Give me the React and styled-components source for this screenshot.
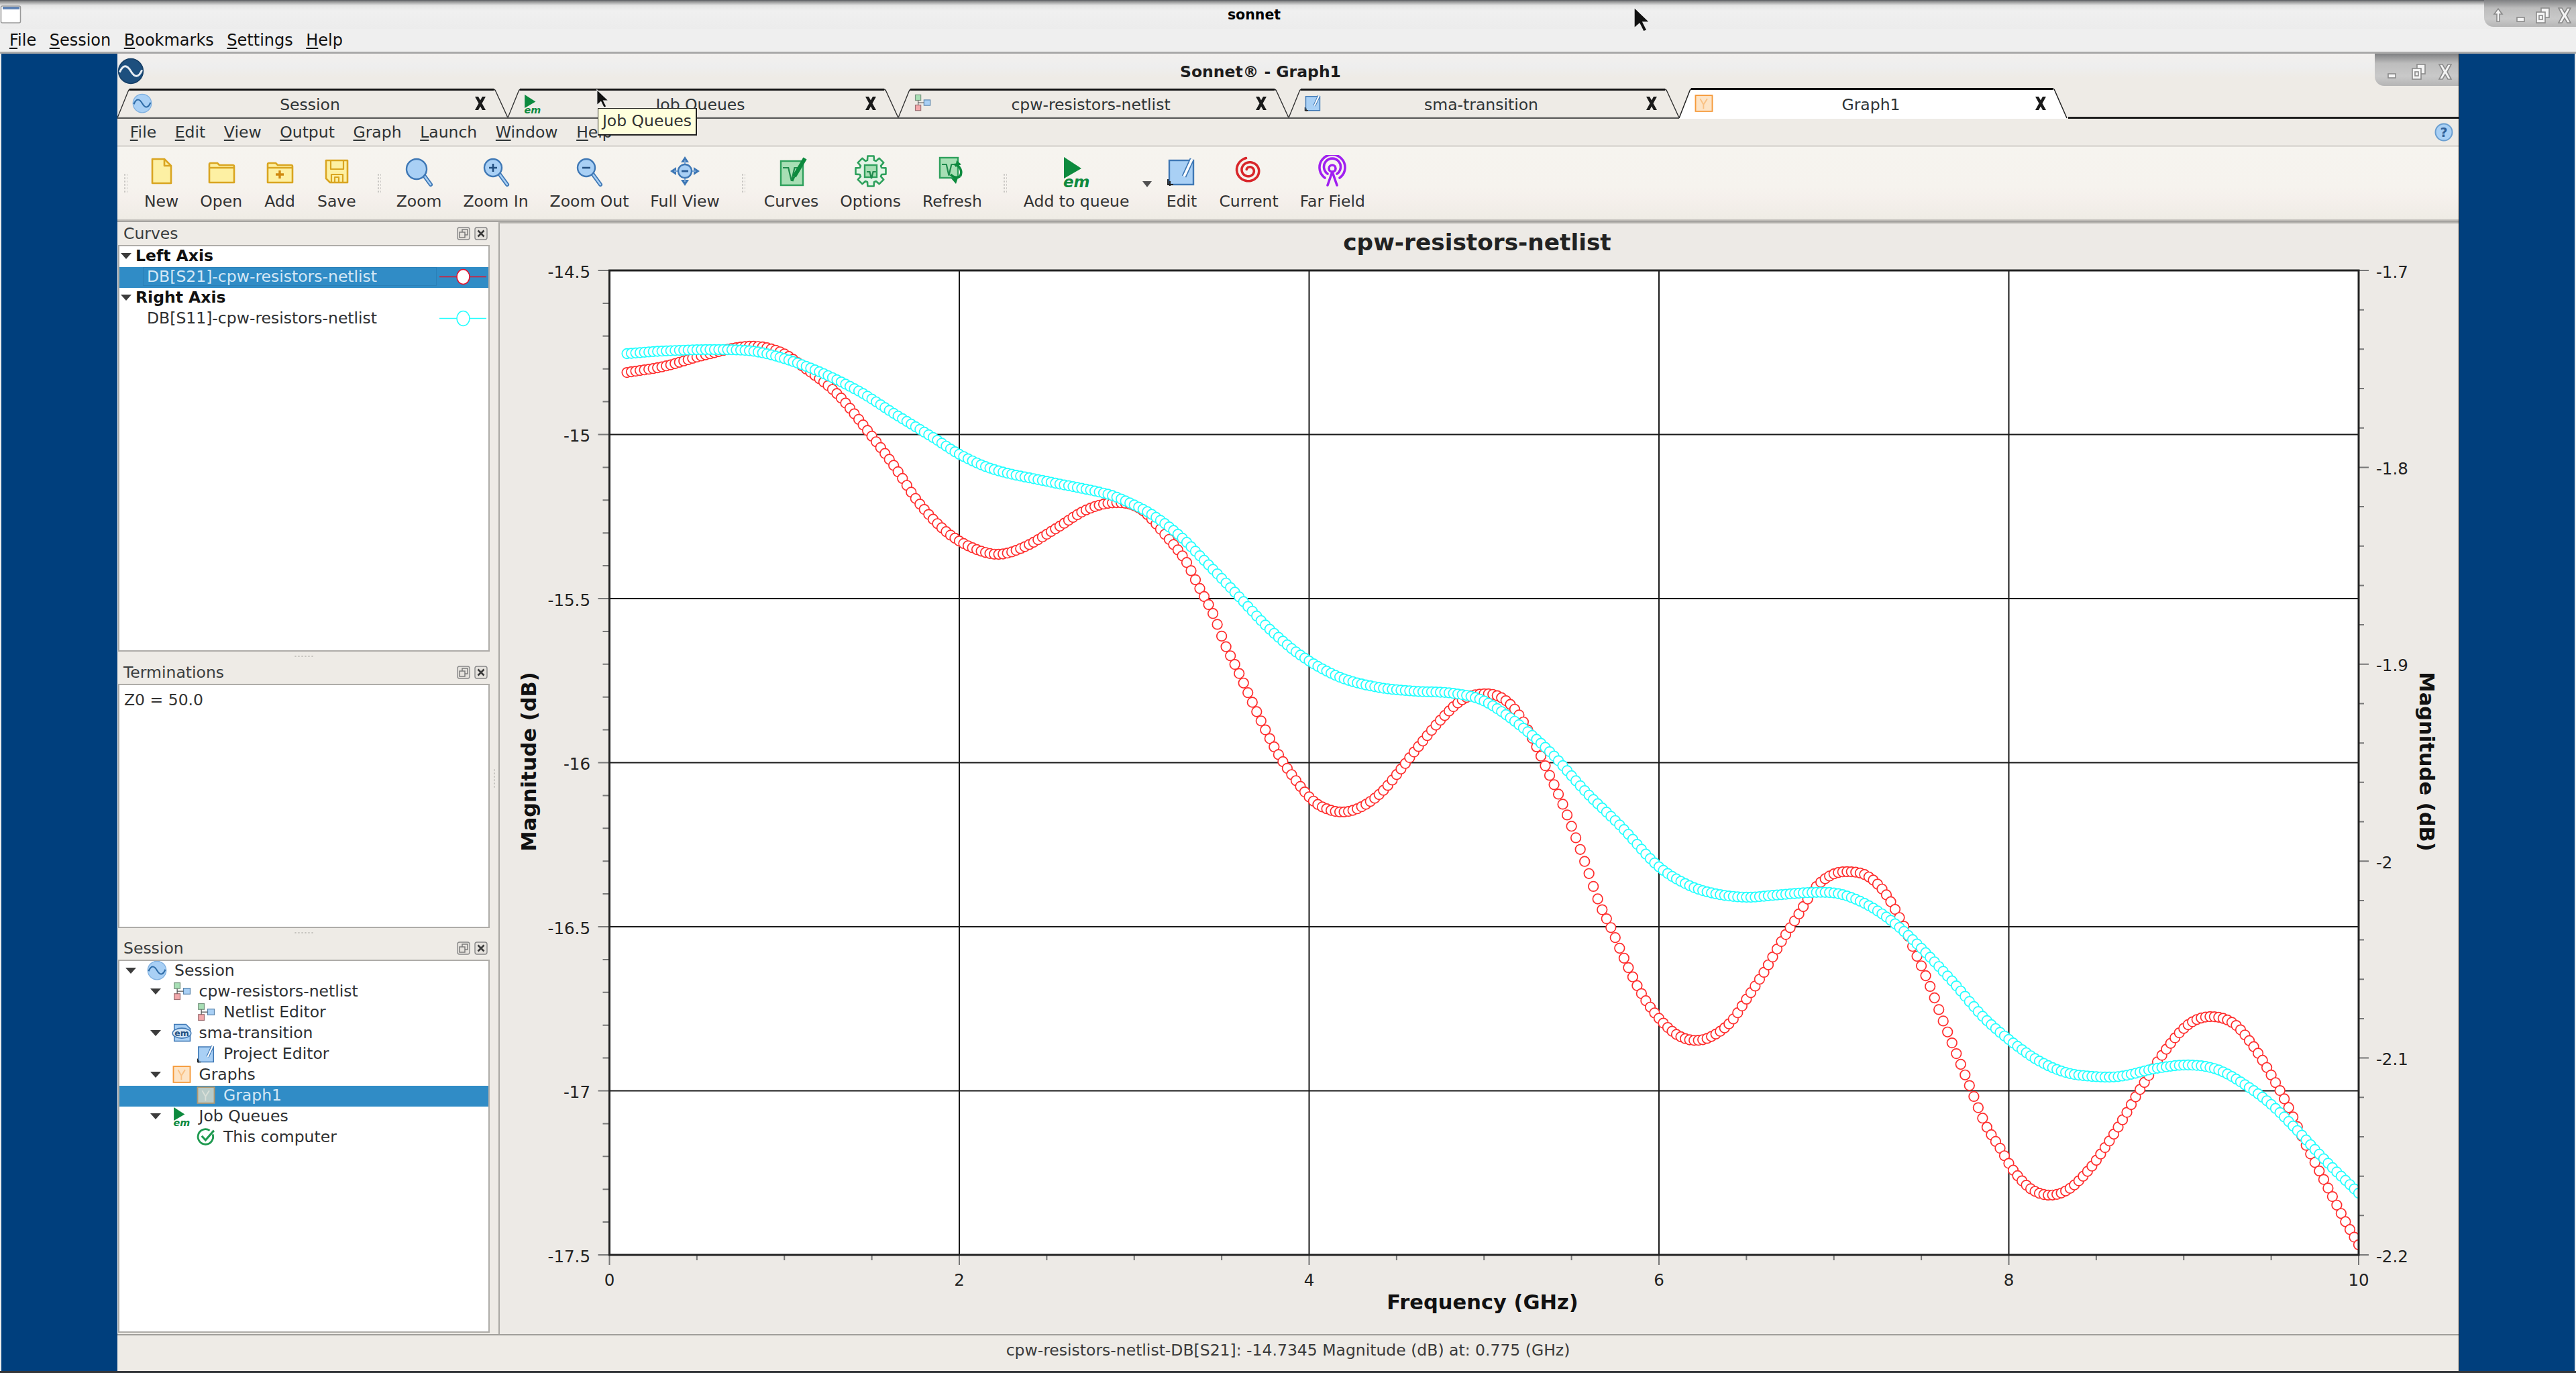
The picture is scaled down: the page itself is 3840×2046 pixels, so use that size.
import React from 'react';
import styled, { createGlobalStyle } from 'styled-components';

const GlobalStyle = createGlobalStyle`
  html, body {
    margin: 0;
    padding: 0;
    background: #003f7d;
  }
  body {
    font-family: "DejaVu Sans", "Liberation Sans", sans-serif;
    font-size: 23.5px;
    color: #2e3436;
  }
`;

// Desktop and the outer (terminal host) window
const Desktop = styled.div`
  position: relative;
  width: 3840px;
  height: 2046px;
  display: flex;
  flex-direction: column;
  overflow: hidden;
  box-sizing: border-box;
  border-bottom: 3px solid #33363a;
`;

const OuterTitle = styled.div`
  height: 43px;
  flex: none;
  display: flex;
  background: linear-gradient(#55585c 0, #8a8b8c 2px, #e4e4e4 8px, #f0f0f0 16px, #ececec 43px);
`;

const HostIcon = styled.svg`
  width: 32px;
  height: 43px;
  flex: none;
`;

const WindowTitle = styled.div`
  flex: 1;
  text-align: center;
  font-weight: 700;
  padding-left: ${(p) => p.$shift || 0}px;
  font-size: ${(p) => p.$size || 20.5}px;
  line-height: ${(p) => p.$line || 44}px;
  color: ${(p) => p.$color || '#000'};
`;

const WindowButtons = styled.div`
  flex: none;
  width: ${(p) => p.$width}px;
  height: ${(p) => p.$height}px;
  box-sizing: border-box;
  padding-top: ${(p) => p.$top}px;
  padding-right: ${(p) => p.$right}px;
  display: flex;
  justify-content: flex-end;
  gap: ${(p) => p.$gap}px;
  border-bottom-left-radius: 14px;
  background: linear-gradient(#7f8082 0, #bdbdbd 30%, #c9c9c9 70%, #b5b5b5 100%);
`;

const OuterMenu = styled.div`
  height: 37px;
  flex: none;
  box-sizing: border-box;
  display: flex;
  gap: 19.5px;
  padding-left: 14px;
  line-height: 34px;
  font-size: 24px;
  color: #111;
  background: #efefef;
  border-bottom: 3px solid #a9a9a9;
`;

const Mn = styled.span`
  text-decoration: underline;
  text-underline-offset: 3px;
`;

const BlueArea = styled.div`
  flex: 1;
  min-height: 0;
  display: flex;
  background: #003f7d;
  padding-left: 175px;
  padding-right: 172px;
  border-left: 2px solid #eee;
  border-right: 2px solid #eee;
  box-sizing: border-box;
`;

// Inner Sonnet window
const InnerWindow = styled.div`
  flex: 1;
  margin-left: -2px;
  display: flex;
  flex-direction: column;
  min-width: 0;
  background: #eeebe6;
  border-right: 1px solid #1a1a1a;
`;

const InnerTitle = styled.div`
  height: 51px;
  flex: none;
  display: flex;
  align-items: flex-start;
  background: linear-gradient(#f2f0ee 0, #eeeeee 20px, #eeebe6 36px);
`;

const LogoWrap = styled.div`
  flex: none;
  width: 40px;
  padding-top: 6px;
`;

const TabBar = styled.div`
  height: 46px;
  flex: none;
  display: flex;
`;

const Tab = styled.div`
  position: relative;
  flex: none;
  width: ${(p) => (p.$active ? 580 : 582)}px;
  height: 46px;
  display: flex;
  align-items: center;
  box-sizing: border-box;
  padding: 0 30px 0 22px;
`;

const TabShape = styled.svg`
  position: absolute;
  left: 0;
  top: 0;
  width: 100%;
  height: 100%;
`;

const TabIcon = styled.span`
  position: relative;
  flex: none;
  width: 30px;
  height: 30px;
  display: flex;
`;

const TabLabel = styled.span`
  position: relative;
  flex: 1;
  text-align: center;
  padding: 4px 8px 0 0;
`;

const TabClose = styled.svg`
  position: relative;
  flex: none;
  width: 22px;
  height: 22px;
`;

const TabRest = styled.div`
  flex: 1;
  border-bottom: 3px solid #1e1e1e;
  box-sizing: border-box;
`;

const MenuRow = styled.div`
  height: 42px;
  flex: none;
  box-sizing: border-box;
  display: flex;
  align-items: center;
  padding: 1px 8px 0 5px;
  border-bottom: 3px solid #dedbd6;
  background: #eeebe6;
`;

const MenuItem = styled.span`
  padding: 0 13.8px;
`;

const HelpButton = styled.svg`
  margin-left: auto;
  width: 28px;
  height: 28px;
`;

const Toolbar = styled.div`
  height: 108px;
  flex: none;
  display: flex;
  align-items: stretch;
  background: linear-gradient(#f6f4ef 0, #f6f3ee 55%, #f5f0ec 70%, #efece5 100%);
`;

const Grip = styled.div`
  flex: none;
  width: ${(p) => p.$width}px;
  display: flex;
  align-items: center;
  justify-content: center;
  padding-left: ${(p) => p.$shift || 0}px;
  box-sizing: border-box;
  &::before {
    content: '';
    width: 6px;
    height: 30px;
    background-image: radial-gradient(circle, #c8c6c2 1px, transparent 1.4px);
    background-size: 4px 5px;
  }
`;

const ToolButton = styled.div`
  flex: none;
  padding: 12px 16px 0;
  display: flex;
  flex-direction: column;
  align-items: center;
  box-sizing: border-box;
  color: #333;
`;

const ToolIcon = styled.div`
  width: 48px;
  height: 48px;
  display: flex;
  justify-content: center;
`;

const ToolLabel = styled.div`
  margin-top: 7px;
  line-height: 28px;
  white-space: nowrap;
`;

const DropArrow = styled.div`
  flex: none;
  width: 22px;
  display: flex;
  justify-content: center;
  align-items: center;
  padding-top: 2px;
  &::before {
    content: '';
    border-left: 7px solid transparent;
    border-right: 7px solid transparent;
    border-top: 9px solid #505050;
  }
`;

const ToolbarEdge = styled.div`
  height: 4px;
  flex: none;
  border-top: 2px solid #bdbab5;
  border-bottom: 2px solid #a5a3a0;
  box-sizing: border-box;
`;

const MainArea = styled.div`
  flex: 1;
  min-height: 0;
  display: flex;
`;

const DockColumn = styled.div`
  flex: none;
  width: 555px;
  display: flex;
  flex-direction: column;
`;

const DockHeader = styled.div`
  height: 34px;
  flex: none;
  display: flex;
  align-items: center;
  padding: 0 3px 0 9px;
  gap: 6px;
  color: #3a3d3e;
`;

const DockTitle = styled.span`
  flex: 1;
`;

const DockButton = styled.svg`
  width: 20px;
  height: 20px;
  flex: none;
`;

const DockBody = styled.div`
  height: ${(p) => p.$height}px;
  flex: none;
  margin-left: 1px;
  box-sizing: border-box;
  background: #fff;
  border: 2px solid #aeaca8;
  overflow: hidden;
`;

const DockGrip = styled.div`
  height: ${(p) => p.$height}px;
  flex: none;
  display: flex;
  justify-content: center;
  align-items: center;
  &::before {
    content: '';
    width: 30px;
    height: 2px;
    background-image: radial-gradient(circle, #c4c2bd 1px, transparent 1.3px);
    background-size: 5px 2px;
  }
`;

const SideGrip = styled.div`
  flex: none;
  width: 13px;
  display: flex;
  justify-content: center;
  align-items: center;
  &::before {
    content: '';
    width: 2px;
    height: 30px;
    background-image: radial-gradient(circle, #c4c2bd 1px, transparent 1.3px);
    background-size: 2px 5px;
  }
`;

const Row = styled.div`
  height: 31px;
  box-sizing: border-box;
  padding-bottom: 3px;
  display: flex;
  align-items: center;
  white-space: nowrap;
  background: ${(p) => (p.$selected ? '#308cc6' : 'transparent')};
  font-weight: ${(p) => (p.$bold ? 700 : 400)};
  color: ${(p) => (p.$bold ? '#111' : p.$selected ? '#d4e7f5' : '#2e3032')};
`;

const CurveCell = styled.span`
  flex: 1;
  align-self: stretch;
  display: flex;
  align-items: center;
  margin-left: 35px;
  padding-left: 5px;
  border: 1px solid ${(p) => (p.$selected ? '#2a80b8' : 'transparent')};
`;

const Swatch = styled.svg`
  flex: none;
  width: 70px;
  height: 31px;
  margin: 0 3px 0 4px;
`;

const Caret = styled.span`
  flex: none;
  width: 18px;
  display: flex;
  justify-content: center;
  &::before {
    content: '';
    display: ${(p) => (p.$open ? 'block' : 'none')};
    border-left: 8px solid transparent;
    border-right: 8px solid transparent;
    border-top: 9px solid #3c3c3c;
  }
`;

const AxisCaret = styled(Caret)`
  margin-left: 1px;
  margin-right: 5px;
`;

const TreeRow = styled(Row)`
  padding-left: ${(p) => 8 + p.$level * 36.5}px;
`;

const TreeIcon = styled.span`
  flex: none;
  width: 30px;
  height: 30px;
  margin: 0 11px 0 15px;
  display: flex;
`;

const TermText = styled.div`
  padding: 8px 7px;
  line-height: 28px;
  color: #333;
`;

const GraphPanel = styled.div`
  flex: 1;
  min-width: 0;
  border-left: 2px solid #aaa8a4;
  border-top: 2px solid #b5b3ae;
  background: #edeae6;
  box-sizing: border-box;
  display: flex;
`;

const Chart = styled.svg`
  display: block;
  width: 100%;
  height: 100%;
  font-family: "DejaVu Sans", sans-serif;
`;

const StatusBar = styled.div`
  height: 55px;
  flex: none;
  box-sizing: border-box;
  border-top: 2px solid #a09e9a;
  text-align: center;
  line-height: 44px;
  color: #3a3a3a;
`;

// things lying over the window
const Tooltip = styled.div`
  position: absolute;
  left: 891px;
  top: 161px;
  width: 148px;
  height: 41px;
  box-sizing: border-box;
  background: #ffffdc;
  border: 1px solid #222;
  border-width: 1px 2px 2px 1px;
  line-height: 36px;
  text-align: center;
  color: #333;
  white-space: nowrap;
`;

const Cursor = styled.svg`
  position: absolute;
  left: ${(p) => p.$x}px;
  top: ${(p) => p.$y}px;
  width: ${(p) => p.$w}px;
  height: ${(p) => p.$h}px;
`;

// icons
const Ic = ({ s = 48, children }) => (
  <svg width={s} height={s} viewBox="0 0 48 48">{children}</svg>
);

const Y = { fill: '#fdf0a3', stroke: '#d9a521', strokeWidth: 2.6, strokeLinejoin: 'round' };
const B = { fill: '#a9d0f5', stroke: '#3f78b5', strokeWidth: 2.4 };
const G = { fill: '#a8dfb5', stroke: '#2ea05c', strokeWidth: 2.4 };
const GREEN = '#0d8a3e';

const NewIcon = () => (
  <Ic>
    <path d="M10 6h18l10 10v26H10z" {...Y} />
    <path d="M28 6v10h10" {...Y} fill="none" />
  </Ic>
);
const OpenIcon = () => (
  <Ic>
    <path d="M6 14q0-2 2-2h10l3 3h20q2 0 2 2v24H6z" {...Y} />
    <path d="M6 19h37" {...Y} fill="none" />
  </Ic>
);
const AddIcon = () => (
  <Ic>
    <path d="M6 14q0-2 2-2h10l3 3h20q2 0 2 2v24H6z" {...Y} />
    <path d="M6 19h37" {...Y} fill="none" />
    <path d="M24 23v12M18 29h12" fill="none" stroke="#d08a10" strokeWidth="3.4" />
  </Ic>
);
const SaveIcon = () => (
  <Ic>
    <path d="M8 8h32v33H14l-6-6z" {...Y} />
    <path d="M15 8v13h19V8M16 41V29h17v12M21 41v-8h6v8" {...Y} fill="none" strokeWidth="2.2" />
  </Ic>
);
const Glass = ({ r = 14, children }) => (
  <Ic>
    <path d="M30 29l11 15" stroke="#3f78b5" strokeWidth="6" strokeLinecap="round" />
    <path d="M30 29l11 15" stroke="#a9d0f5" strokeWidth="2.5" strokeLinecap="round" />
    <circle cx="20" cy={6 + r} r={r} {...B} />
    {children}
  </Ic>
);
const FullViewIcon = () => (
  <Ic>
    <g fill="#3f78b5" stroke="none">
      <path d="M24 2l6 9h-12zM24 46l6-9h-12zM2 24l9-6v12zM46 24l-9-6v12z" />
    </g>
    <path d="M24 8v32M8 24h32" stroke="#7da9d8" strokeWidth="2" />
    <circle cx="24" cy="24" r="10" {...B} />
    <path d="M19 24h10" stroke="#2d5f98" strokeWidth="3" />
  </Ic>
);
const DocCurve = ({ x = 8, y = 9, w = 33, h = 36 }) => (
  <>
    <rect x={x} y={y} width={w} height={h} {...G} />
    <path
      d={`M${x + 3} ${y + 10}h${w * 0.25}l${w * 0.14} ${h * 0.55}l${w * 0.14} -${h * 0.55}h${w * 0.24}`}
      fill="none"
      stroke="#1f8a4c"
      strokeWidth="2.2"
    />
  </>
);
const CurvesIcon = () => (
  <Ic>
    <DocCurve />
    <path d="M28 32l16-27" stroke={GREEN} strokeWidth="6" />
    <path d="M28 32l-3 7" stroke={GREEN} strokeWidth="3" />
  </Ic>
);
const gearPath = () => {
  let d = '';
  for (let i = 0; i < 8; i++) {
    const a = (i * Math.PI) / 4 - Math.PI / 2;
    const pts = [
      [a - 0.3, 17],
      [a - 0.2, 23],
      [a + 0.2, 23],
      [a + 0.3, 17]
    ];
    pts.forEach(([t, r], k) => {
      d += `${i === 0 && k === 0 ? 'M' : 'L'}${(24 + r * Math.cos(t)).toFixed(1)} ${(24 + r * Math.sin(t)).toFixed(1)}`;
    });
  }
  return d + 'z';
};
const OptionsIcon = () => (
  <Ic>
    <path d={gearPath()} fill="#e3f4e6" stroke="#2ea05c" strokeWidth="2.6" strokeLinejoin="round" />
    <DocCurve x={15} y={15} w={18} h={18} />
  </Ic>
);
const RefreshIcon = () => (
  <Ic>
    <DocCurve x={6} y={4} w={27} h={30} />
    <path d="M28 14a12 12 0 0 1 8 18" fill="none" stroke={GREEN} strokeWidth="3.5" />
    <path d="M36 32a12 12 0 0 1-14-3" fill="none" stroke={GREEN} strokeWidth="3.5" />
    <path d="M31 8l-2 10 9-4zM30 43l-7-8 10-1z" fill={GREEN} />
  </Ic>
);
const EmIcon = ({ s }) => (
  <Ic s={s}>
    <path d="M5 3l26 17-26 15z" fill={GREEN} />
    <text x="4" y="48" fontFamily="DejaVu Sans" fontStyle="italic" fontWeight="700" fontSize="23" fill={GREEN}>em</text>
  </Ic>
);
const EditIcon = ({ s }) => (
  <Ic s={s}>
    <rect x="6" y="8" width="36" height="36" {...B} />
    <path d="M28 32l12-26" stroke="#3f78b5" strokeWidth="7" />
    <path d="M28 32l12-26" stroke="#fff" strokeWidth="3.6" />
    <path d="M4 36v8h8M7 46v-7" fill="none" stroke="#222" strokeWidth="2" />
  </Ic>
);
const spiralPath = () => {
  let d = '';
  for (let i = 0; i <= 90; i++) {
    const t = (i / 90) * 2.15 * 2 * Math.PI;
    const r = 4 + (i / 90) * 16;
    const x = 24 - r * Math.cos(t + 0.4);
    const y = 23 - r * 0.95 * Math.sin(t + 0.4);
    d += `${i ? 'L' : 'M'}${x.toFixed(1)} ${y.toFixed(1)}`;
  }
  return d;
};
const CurrentIcon = () => (
  <Ic>
    <path d={spiralPath()} fill="none" stroke="#d8262a" strokeWidth="3.6" strokeLinecap="round" />
  </Ic>
);
const FarFieldIcon = () => (
  <Ic>
    <g fill="none" stroke="#a01ff0" strokeWidth="3.6" strokeLinecap="round">
      <path d="M13 34a19 19 0 1 1 22 0" />
      <path d="M17 28a12.5 12.5 0 1 1 14 0" />
      <circle cx="24" cy="20" r="5" />
      <path d="M24 25l-7 20M24 25l7 20" />
    </g>
  </Ic>
);
const WaveIcon = ({ s, dark }) => (
  <Ic s={s}>
    <circle cx="24" cy="24" r="22" fill={dark ? '#1d4f7e' : '#a9d0f5'} stroke={dark ? '#174068' : '#7fb0e0'} strokeWidth="2" />
    <path d="M4 26c6-14 13-14 20-2s14 12 20-2" fill="none" stroke={dark ? '#e8eef4' : '#2f6da8'} strokeWidth="3.5" />
  </Ic>
);
const NetlistIcon = ({ s }) => (
  <Ic s={s}>
    <rect x="6" y="4" width="14" height="14" fill="#a8dfb5" stroke="#77957f" strokeWidth="2" />
    <rect x="6" y="30" width="14" height="14" fill="#f3a9ac" stroke="#a07074" strokeWidth="2" />
    <rect x="28" y="17" width="16" height="14" fill="#a9d0f5" stroke="#5a85ad" strokeWidth="2" />
    <path d="M13 18v12M13 24h15" stroke="#555" strokeWidth="2" fill="none" />
  </Ic>
);
const ProjectIcon = ({ s }) => (
  <Ic s={s}>
    <path d="M6 4h28l10 10v30H6z" fill="#a9d0f5" stroke="#3f78b5" strokeWidth="2.5" />
    <ellipse cx="24" cy="25" rx="22" ry="12" fill="#d8e8f6" stroke="#3f78b5" strokeWidth="2.5" />
    <text x="24" y="32" textAnchor="middle" fontFamily="DejaVu Sans" fontWeight="700" fontSize="20" fill="#1f4f80">em</text>
  </Ic>
);
const GraphIcon = ({ s, selected }) => (
  <Ic s={s}>
    <rect x="4" y="5" width="40" height="38" fill={selected ? '#b9cbc8' : '#fde4c6'} stroke={selected ? '#b39a70' : '#f59a3a'} strokeWidth="3" />
    <path d="M15 13l8 14 9-14M23 27v10" fill="none" stroke={selected ? '#d9dfd8' : '#f9c184'} strokeWidth="3" />
  </Ic>
);
const CheckIcon = ({ s }) => (
  <Ic s={s}>
    <path d="M40 18a18 18 0 1 1-7-9" fill="none" stroke="#1f9a50" strokeWidth="4.5" />
    <path d="M14 22l9 10 20-23" fill="none" stroke="#1f9a50" strokeWidth="5" />
  </Ic>
);

const CloseGlyph = () => (
  <TabClose viewBox="0 0 22 22">
    <path d="M3 1h5l11 20h-5zM14 1h5L8 21H3z" fill="#1a1a1a" />
  </TabClose>
);

const WinBtnGlyph = ({ kind, size = 26 }) => (
  <svg width={size} height={size} viewBox="0 0 26 26">
    <g fill="#f4f4f4" stroke="#8a8a8a" strokeWidth="1.6">
      {kind === 'up' && <path d="M13 3l6 8h-4v11h-4V11H7z" />}
      {kind === 'min' && <rect x="8" y="16" width="11" height="6" />}
      {kind === 'max' && (
        <>
          <rect x="11" y="2" width="12" height="14" />
          <rect x="4" y="8" width="13" height="16" />
          <rect x="8" y="13" width="5" height="6" />
        </>
      )}
      {kind === 'close' && <path d="M4 2h5l4 7 4-7h5l-6 11 6 11h-5l-4-7-4 7H4l6-11z" />}
    </g>
  </svg>
);

const DockButtons = () => (
  <>
    <DockButton viewBox="0 0 20 20">
      <rect x="1" y="1" width="18" height="18" rx="3" fill="#e5e2dd" stroke="#888" strokeWidth="1.4" />
      <rect x="8" y="4" width="8" height="8" fill="none" stroke="#777" strokeWidth="1.4" />
      <rect x="4" y="8" width="8" height="8" fill="#e5e2dd" stroke="#777" strokeWidth="1.4" />
    </DockButton>
    <DockButton viewBox="0 0 20 20">
      <rect x="1" y="1" width="18" height="18" rx="3" fill="#e5e2dd" stroke="#888" strokeWidth="1.4" />
      <path d="M5.5 5.5l9 9M14.5 5.5l-9 9" stroke="#3a3a3a" strokeWidth="2.6" />
    </DockButton>
  </>
);

const LegendMark = ({ color }) => (
  <Swatch viewBox="0 0 70 31">
    <path d="M0 15.5h70" stroke={color} strokeWidth="1.6" />
    <ellipse cx="35.5" cy="15.5" rx="9.5" ry="11" fill="#fff" stroke={color} strokeWidth="1.6" />
  </Swatch>
);

// data: curves read off the plot, in page pixels
const RED = [[935,555],[990,546],[1047,530],[1116,516],[1162,524],[1202,550],[1248,587],[1288,635],[1334,696],[1368,747],[1409,791],[1449,816],[1489,826],[1529,814],[1575,787],[1621,759],[1665,749],[1701,759],[1737,797],[1767,835],[1788,876],[1808,914],[1826,960],[1846,1001],[1867,1047],[1885,1085],[1905,1123],[1931,1162],[1956,1192],[1977,1205],[2002,1210],[2028,1203],[2058,1182],[2086,1149],[2114,1113],[2150,1070],[2181,1042],[2211,1034],[2237,1039],[2262,1062],[2288,1108],[2308,1151],[2329,1197],[2349,1248],[2367,1297],[2385,1348],[2403,1386],[2420,1426],[2446,1479],[2471,1515],[2497,1540],[2522,1550],[2548,1546],[2579,1524],[2604,1488],[2630,1448],[2655,1404],[2681,1363],[2706,1323],[2732,1303],[2757,1299],[2783,1305],[2808,1328],[2834,1372],[2854,1417],[2874,1462],[2895,1517],[2915,1567],[2936,1618],[2959,1674],[2982,1712],[3002,1745],[3028,1772],[3056,1781],[3084,1772],[3114,1743],[3140,1707],[3165,1667],[3191,1622],[3231,1561],[3263,1526],[3295,1515],[3328,1524],[3354,1552],[3381,1594],[3408,1643],[3435,1701],[3462,1754],[3494,1816],[3516,1855]];
const CYAN = [[935,527],[990,523],[1076,521],[1133,525],[1202,546],[1277,581],[1334,617],[1391,652],[1432,678],[1483,700],[1564,718],[1650,736],[1681,748],[1716,766],[1757,797],[1798,838],[1844,886],[1890,935],[1941,978],[1997,1009],[2053,1024],[2109,1030],[2165,1033],[2211,1044],[2262,1078],[2313,1123],[2364,1180],[2415,1230],[2471,1290],[2517,1319],[2558,1332],[2604,1337],[2645,1334],[2701,1330],[2742,1332],[2783,1348],[2823,1375],[2864,1413],[2910,1462],[2956,1515],[2997,1551],[3038,1580],[3079,1598],[3119,1604],[3160,1604],[3215,1592],[3263,1587],[3306,1594],[3349,1618],[3387,1647],[3424,1684],[3467,1730],[3516,1778]];

const X0 = 908.5;
const X1 = 3516;
const Y0 = 403;
const Y1 = 1870;
const GHZ = (X1 - X0) / 10;

const sample = (pts) => {
  const slope = (i) => {
    const a = pts[Math.max(i - 1, 0)];
    const b = pts[Math.min(i + 1, pts.length - 1)];
    return (b[1] - a[1]) / (b[0] - a[0]);
  };
  const out = [];
  for (let f = 0.1; f <= 10.001; f += 0.025) {
    const x = X0 + f * GHZ;
    let i = 0;
    while (i < pts.length - 2 && pts[i + 1][0] < x) i++;
    const [xa, ya] = pts[i];
    const [xb, yb] = pts[i + 1];
    const h = xb - xa;
    const t = (x - xa) / h;
    const y =
      (2 * t ** 3 - 3 * t ** 2 + 1) * ya +
      (t ** 3 - 2 * t ** 2 + t) * h * slope(i) +
      (-2 * t ** 3 + 3 * t ** 2) * yb +
      (t ** 3 - t ** 2) * h * slope(i + 1);
    out.push([x, y]);
  }
  return out;
};

const Markers = ({ pts, color }) => (
  <g fill="#fff" stroke={color} strokeWidth="1.7" clipPath="url(#plot)">
    {sample(pts).map(([x, y], i) => (
      <circle key={i} cx={x.toFixed(1)} cy={y.toFixed(1)} r="7.3" />
    ))}
  </g>
);

const Plot = () => {
  const leftLabels = ['-14.5', '-15', '-15.5', '-16', '-16.5', '-17', '-17.5'];
  const rightLabels = ['-1.7', '-1.8', '-1.9', '-2', '-2.1', '-2.2'];
  const bottomLabels = ['0', '2', '4', '6', '8', '10'];
  const hStep = (Y1 - Y0) / 6;
  const rStep = (Y1 - Y0) / 5;
  const ticks = [];
  for (let i = 0; i <= 30; i++) {
    const y = Y0 + (i * hStep) / 5;
    ticks.push(`M${X0} ${y}h${i % 5 === 0 ? -17 : -10}`);
  }
  for (let i = 0; i <= 25; i++) {
    const y = Y0 + (i * rStep) / 5;
    ticks.push(`M${X1} ${y}h${i % 5 === 0 ? 15 : 8}`);
  }
  for (let i = 0; i <= 20; i++) {
    const x = X0 + i * 0.5 * GHZ;
    ticks.push(`M${x} ${Y1}v${i % 4 === 0 ? 15 : 8}`);
  }
  return (
    <Chart viewBox="745 333 2920 1655" preserveAspectRatio="none">
      <defs>
        <clipPath id="plot">
          <rect x={X0} y={Y0} width={X1 - X0} height={Y1 - Y0} />
        </clipPath>
      </defs>
      <rect x={X0} y={Y0} width={X1 - X0} height={Y1 - Y0} fill="#fff" />
      <path d={ticks.join('')} stroke="#777" strokeWidth="2" fill="none" />
      <g stroke="#1a1a1a" strokeWidth="2">
        {[1, 2, 3, 4, 5].map((i) => (
          <line key={i} x1={X0} x2={X1} y1={Y0 + i * hStep} y2={Y0 + i * hStep} />
        ))}
        {[2, 4, 6, 8].map((g) => (
          <line key={g} x1={X0 + g * GHZ} x2={X0 + g * GHZ} y1={Y0} y2={Y1} />
        ))}
      </g>
      <Markers pts={RED} color="#ff2d2d" />
      <Markers pts={CYAN} color="#22ffff" />
      <rect x={X0} y={Y0} width={X1 - X0} height={Y1 - Y0} fill="none" stroke="#222" strokeWidth="3" />
      <g fontSize="24.5" fill="#222">
        {leftLabels.map((t, i) => (
          <text key={t} x="880" y={Y0 + i * hStep + 10.5} textAnchor="end">{t}</text>
        ))}
        {rightLabels.map((t, i) => (
          <text key={t} x="3542" y={Y0 + i * rStep + 10.5}>{t}</text>
        ))}
        {bottomLabels.map((t, i) => (
          <text key={t} x={X0 + i * 2 * GHZ} y="1916" textAnchor="middle">{t}</text>
        ))}
      </g>
      <text x="2202" y="373" textAnchor="middle" fontSize="34.3" fontWeight="700" fill="#222">cpw-resistors-netlist</text>
      <g fontSize="30.5" fontWeight="700" fill="#111">
        <text x="2210" y="1951" textAnchor="middle">Frequency (GHz)</text>
        <text transform="translate(799 1135) rotate(-90)" textAnchor="middle">Magnitude (dB)</text>
        <text transform="translate(3607 1135) rotate(90)" textAnchor="middle">Magnitude (dB)</text>
      </g>
    </Chart>
  );
};

const tabs = [
  { label: 'Session', icon: <WaveIcon s={30} /> },
  { label: 'Job Queues', icon: <EmIcon s={30} /> },
  { label: 'cpw-resistors-netlist', icon: <NetlistIcon s={28} /> },
  { label: 'sma-transition', icon: <EditIcon s={28} /> },
  { label: 'Graph1', icon: <GraphIcon s={30} />, active: true }
];

const menus = [
  ['F', 'ile'],
  ['E', 'dit'],
  ['V', 'iew'],
  ['O', 'utput'],
  ['G', 'raph'],
  ['L', 'aunch'],
  ['W', 'indow'],
  ['H', 'elp']
];

const TabOutline = ({ active }) => (
  <TabShape viewBox="0 0 581 46" preserveAspectRatio="none">
    {active ? (
      <>
        <path d="M0 46L16 4q1-3 4-3H557q3 0 4 3L579 46z" fill="#fff" />
        <path d="M0 45L16 4q1-3 4-3H557q3 0 4 3L579 45" fill="none" stroke="#222" strokeWidth="1.5" />
        <path d="M18 1.5H558" stroke="#111" strokeWidth="3" />
      </>
    ) : (
      <>
        <path d="M0 45L16 5q1-3 4-3H559q3 0 4 3L581 45z" fill="#eeebe6" />
        <path d="M0 44.5L16 5q1-3 4-3H559q3 0 4 3L581 44.5" fill="none" stroke="#333" strokeWidth="1.4" />
        <path d="M18 2.5H560" stroke="#111" strokeWidth="3" />
        <path d="M0 45H581" stroke="#5a5a5a" strokeWidth="2.4" />
      </>
    )}
  </TabShape>
);

const App = () => (
  <Desktop>
    <GlobalStyle />
    <OuterTitle>
      <HostIcon viewBox="0 0 32 43">
        <rect x="1.5" y="9" width="29" height="25" rx="2" fill="#fff" stroke="#999" strokeWidth="1.5" />
        <rect x="4" y="10" width="25" height="4" fill="#5f82b4" />
      </HostIcon>
      <WindowTitle $shift={4}>sonnet</WindowTitle>
      <WindowButtons $width={137} $height={40} $top={10} $right={4} $gap={7}>
        <WinBtnGlyph kind="up" />
        <WinBtnGlyph kind="min" />
        <WinBtnGlyph kind="max" />
        <WinBtnGlyph kind="close" />
      </WindowButtons>
    </OuterTitle>
    <OuterMenu>
      <span><Mn>F</Mn>ile</span>
      <span><Mn>S</Mn>ession</span>
      <span><Mn>B</Mn>ookmarks</span>
      <span><Mn>S</Mn>ettings</span>
      <span><Mn>H</Mn>elp</span>
    </OuterMenu>
    <BlueArea>
      <InnerWindow>
        <InnerTitle>
          <LogoWrap><WaveIcon s={40} dark /></LogoWrap>
          <WindowTitle $shift={3} $size={23.5} $line={54} $color="#1c1c1c">Sonnet® - Graph1</WindowTitle>
          <WindowButtons $width={125} $height={48} $top={14} $right={7} $gap={14}>
            <WinBtnGlyph kind="min" />
            <WinBtnGlyph kind="max" />
            <WinBtnGlyph kind="close" />
          </WindowButtons>
        </InnerTitle>
        <TabBar>
          {tabs.map((t) => (
            <Tab key={t.label} $active={t.active}>
              <TabOutline active={t.active} />
              <TabIcon>{t.icon}</TabIcon>
              <TabLabel>{t.label}</TabLabel>
              <CloseGlyph />
            </Tab>
          ))}
          <TabRest />
        </TabBar>
        <MenuRow>
          {menus.map(([m, rest]) => (
            <MenuItem key={m}><Mn>{m}</Mn>{rest}</MenuItem>
          ))}
          <HelpButton viewBox="0 0 28 28">
            <circle cx="14" cy="14" r="12.5" fill="#a9d0f5" stroke="#6a9ed0" strokeWidth="2" />
            <text x="14" y="21" textAnchor="middle" fontSize="19" fontWeight="700" fill="#2f5f98" fontFamily="DejaVu Sans">?</text>
          </HelpButton>
        </MenuRow>
        <Toolbar>
          <Grip $width={24} />
          <ToolButton><ToolIcon><NewIcon /></ToolIcon><ToolLabel>New</ToolLabel></ToolButton>
          <ToolButton><ToolIcon><OpenIcon /></ToolIcon><ToolLabel>Open</ToolLabel></ToolButton>
          <ToolButton><ToolIcon><AddIcon /></ToolIcon><ToolLabel>Add</ToolLabel></ToolButton>
          <ToolButton><ToolIcon><SaveIcon /></ToolIcon><ToolLabel>Save</ToolLabel></ToolButton>
          <Grip $width={28} $shift={8} />
          <ToolButton><ToolIcon><Glass r={15} /></ToolIcon><ToolLabel>Zoom</ToolLabel></ToolButton>
          <ToolButton>
            <ToolIcon>
              <Glass r={13}><path d="M20 13v12M14 19h12" stroke="#234f80" strokeWidth="2.6" /></Glass>
            </ToolIcon>
            <ToolLabel>Zoom In</ToolLabel>
          </ToolButton>
          <ToolButton>
            <ToolIcon>
              <Glass r={13}><path d="M14 19h12" stroke="#234f80" strokeWidth="2.6" /></Glass>
            </ToolIcon>
            <ToolLabel>Zoom Out</ToolLabel>
          </ToolButton>
          <ToolButton><ToolIcon><FullViewIcon /></ToolIcon><ToolLabel>Full View</ToolLabel></ToolButton>
          <Grip $width={34} $shift={4} />
          <ToolButton><ToolIcon><CurvesIcon /></ToolIcon><ToolLabel>Curves</ToolLabel></ToolButton>
          <ToolButton><ToolIcon><OptionsIcon /></ToolIcon><ToolLabel>Options</ToolLabel></ToolButton>
          <ToolButton><ToolIcon><RefreshIcon /></ToolIcon><ToolLabel>Refresh</ToolLabel></ToolButton>
          <Grip $width={30} $shift={6} />
          <ToolButton><ToolIcon><EmIcon /></ToolIcon><ToolLabel>Add to queue</ToolLabel></ToolButton>
          <DropArrow />
          <ToolButton><ToolIcon><EditIcon /></ToolIcon><ToolLabel>Edit</ToolLabel></ToolButton>
          <ToolButton><ToolIcon><CurrentIcon /></ToolIcon><ToolLabel>Current</ToolLabel></ToolButton>
          <ToolButton><ToolIcon><FarFieldIcon /></ToolIcon><ToolLabel>Far Field</ToolLabel></ToolButton>
        </Toolbar>
        <ToolbarEdge />
        <MainArea>
          <DockColumn>
            <DockHeader><DockTitle>Curves</DockTitle><DockButtons /></DockHeader>
            <DockBody $height={606}>
              <Row $bold><AxisCaret $open />Left Axis</Row>
              <Row $selected>
                <CurveCell $selected>DB[S21]-cpw-resistors-netlist</CurveCell>
                <LegendMark color="#e8102a" />
              </Row>
              <Row $bold><AxisCaret $open />Right Axis</Row>
              <Row>
                <CurveCell>DB[S11]-cpw-resistors-netlist</CurveCell>
                <LegendMark color="#22ffff" />
              </Row>
            </DockBody>
            <DockGrip $height={14} />
            <DockHeader><DockTitle>Terminations</DockTitle><DockButtons /></DockHeader>
            <DockBody $height={364}>
              <TermText>Z0 = 50.0</TermText>
            </DockBody>
            <DockGrip $height={13} />
            <DockHeader><DockTitle>Session</DockTitle><DockButtons /></DockHeader>
            <DockBody $height={556}>
              <TreeRow $level={0}><Caret $open /><TreeIcon><WaveIcon s={30} /></TreeIcon>Session</TreeRow>
              <TreeRow $level={1}><Caret $open /><TreeIcon><NetlistIcon s={30} /></TreeIcon>cpw-resistors-netlist</TreeRow>
              <TreeRow $level={2}><Caret /><TreeIcon><NetlistIcon s={30} /></TreeIcon>Netlist Editor</TreeRow>
              <TreeRow $level={1}><Caret $open /><TreeIcon><ProjectIcon s={30} /></TreeIcon>sma-transition</TreeRow>
              <TreeRow $level={2}><Caret /><TreeIcon><EditIcon s={30} /></TreeIcon>Project Editor</TreeRow>
              <TreeRow $level={1}><Caret $open /><TreeIcon><GraphIcon s={30} /></TreeIcon>Graphs</TreeRow>
              <TreeRow $level={2} $selected><Caret /><TreeIcon><GraphIcon s={30} selected /></TreeIcon>Graph1</TreeRow>
              <TreeRow $level={1}><Caret $open /><TreeIcon><EmIcon s={30} /></TreeIcon>Job Queues</TreeRow>
              <TreeRow $level={2}><Caret /><TreeIcon><CheckIcon s={30} /></TreeIcon>This computer</TreeRow>
            </DockBody>
          </DockColumn>
          <SideGrip />
          <GraphPanel><Plot /></GraphPanel>
        </MainArea>
        <StatusBar>cpw-resistors-netlist-DB[S21]: -14.7345 Magnitude (dB) at: 0.775 (GHz)</StatusBar>
      </InnerWindow>
    </BlueArea>
    <Cursor $x={889} $y={133} $w={18} $h={28} viewBox="0 0 24 38">
      <path d="M1 1v31l8-7 6 12 5-2-6-12h10z" fill="#111" stroke="#eee" strokeWidth="1.4" />
    </Cursor>
    <Tooltip>Job Queues</Tooltip>
    <Cursor $x={2435} $y={10} $w={24} $h={38} viewBox="0 0 24 38">
      <path d="M1 1v31l8-7 6 12 5-2-6-12h10z" fill="#111" stroke="#eee" strokeWidth="1.4" />
    </Cursor>
  </Desktop>
);

export default App;
